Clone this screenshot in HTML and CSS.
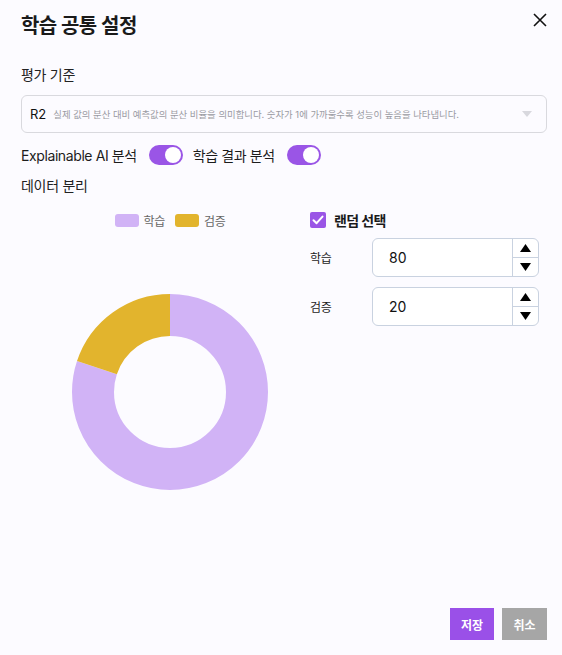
FILE: index.html
```html
<!DOCTYPE html>
<html lang="ko">
<head>
<meta charset="utf-8">
<title>학습 공통 설정</title>
<link rel="stylesheet" href="styles.css">
</head>
<body>
<div class="dialog">
  <div class="header">
    <h1 class="title">학습 공통 설정</h1>
    <button class="close" aria-label="닫기">
      <svg width="14" height="14" viewBox="0 0 14 14"><path d="M1 1L13 13M13 1L1 13" stroke="#111" stroke-width="1.6" fill="none"/></svg>
    </button>
  </div>

  <div class="section-label">평가 기준</div>
  <div class="select">
    <span class="sel-value">R2</span>
    <span class="sel-desc">실제 값의 분산 대비 예측값의 분산 비율을 의미합니다. 숫자가 1에 가까울수록 성능이 높음을 나타냅니다.</span>
    <svg class="sel-arrow" width="10" height="6" viewBox="0 0 10 6"><path d="M0 0H10L5 6Z" fill="#d8d8de"/></svg>
  </div>

  <div class="toggles">
    <span class="toggle-label">Explainable AI 분석</span>
    <span class="toggle"><span class="knob"></span></span>
    <span class="toggle-label">학습 결과 분석</span>
    <span class="toggle"><span class="knob"></span></span>
  </div>

  <div class="section-label split-label">데이터 분리</div>

  <div class="split">
    <div class="chart-col">
      <div class="legend">
        <span class="swatch lav"></span><span class="legend-text">학습</span>
        <span class="swatch gold"></span><span class="legend-text">검증</span>
      </div>
      <svg class="donut" width="200" height="200" viewBox="0 0 200 200">
        <g transform="rotate(-90 100 100)">
          <circle cx="100" cy="100" r="77" fill="none" stroke="#d1b3f6" stroke-width="42" stroke-dasharray="387.04 483.81"/>
          <circle cx="100" cy="100" r="77" fill="none" stroke="#e2b42d" stroke-width="42" stroke-dasharray="96.76 483.81" stroke-dashoffset="-387.04"/>
        </g>
      </svg>
    </div>
    <div class="form-col">
      <label class="check-row">
        <span class="checkbox">
          <svg width="12" height="10" viewBox="0 0 12 10"><path d="M1.5 5.2L4.6 8.2L10.5 1.6" stroke="#fff" stroke-width="2" fill="none" stroke-linecap="round" stroke-linejoin="round"/></svg>
        </span>
        <span class="check-text">랜덤 선택</span>
      </label>
      <div class="num-row">
        <span class="num-label">학습</span>
        <div class="num-input">
          <span class="num-value">80</span>
          <div class="spin">
            <span class="spin-btn"><svg width="11" height="8" viewBox="0 0 11 8"><path d="M5.5 0L11 8H0Z" fill="#000"/></svg></span>
            <span class="spin-btn"><svg width="11" height="8" viewBox="0 0 11 8"><path d="M0 0H11L5.5 8Z" fill="#000"/></svg></span>
          </div>
        </div>
      </div>
      <div class="num-row">
        <span class="num-label">검증</span>
        <div class="num-input">
          <span class="num-value">20</span>
          <div class="spin">
            <span class="spin-btn"><svg width="11" height="8" viewBox="0 0 11 8"><path d="M5.5 0L11 8H0Z" fill="#000"/></svg></span>
            <span class="spin-btn"><svg width="11" height="8" viewBox="0 0 11 8"><path d="M0 0H11L5.5 8Z" fill="#000"/></svg></span>
          </div>
        </div>
      </div>
    </div>
  </div>

  <div class="footer">
    <button class="btn save">저장</button>
    <button class="btn cancel">취소</button>
  </div>
</div>
</body>
</html>
```

FILE: styles.css
```css
* { box-sizing: border-box; }
html, body { margin: 0; padding: 0; }
body {
  background: #fcfbff;
  font-family: Inter, "Noto Sans CJK KR", sans-serif;
  color: #1c1c1c;
  width: 562px;
  height: 655px;
  overflow: hidden;
}
.dialog {
  height: 655px;
  display: flex;
  flex-direction: column;
  padding: 0 15px 15px 21px;
}
.header {
  display: flex;
  justify-content: space-between;
  align-items: flex-start;
  height: 52px;
}
.title {
  margin: 12px 0 0;
  font-size: 20px;
  font-weight: 600;
  line-height: 28px;
  letter-spacing: -0.6px;
  color: #1a1a1a;
}
.close {
  border: 0;
  background: none;
  padding: 0;
  margin: 13px 0 0;
  width: 14px;
  height: 14px;
  display: flex;
}
.section-label {
  font-size: 14px;
  line-height: 20px;
  letter-spacing: -0.3px;
  color: #222;
  margin-top: 13px;
}
.select {
  margin-top: 10px;
  width: 526px;
  height: 38px;
  border: 1px solid #d9d9de;
  border-radius: 6px;
  display: flex;
  align-items: center;
  padding: 0 14px 0 8px;
}
.sel-value {
  font-size: 13px;
  color: #111;
}
.sel-desc {
  font-size: 9.4px;
  color: #9a9aa2;
  margin-left: 7px;
  flex: 1;
  white-space: nowrap;
}
.sel-arrow { flex: none; }
.toggles {
  display: flex;
  align-items: center;
  margin-top: 12px;
  height: 20px;
}
.toggle-label {
  font-size: 14px;
  letter-spacing: -0.4px;
  color: #1c1c1c;
}
.toggle {
  width: 34px;
  height: 20px;
  border-radius: 10px;
  background: #9a55e6;
  margin: 0 10px 0 12px;
  display: flex;
  align-items: center;
  justify-content: flex-end;
  padding-right: 2px;
}
.knob {
  width: 16px;
  height: 16px;
  border-radius: 50%;
  background: #fff;
}
.split-label { margin-top: 11px; }
.split {
  display: flex;
  margin-top: 16px;
}
.chart-col {
  width: 260px;
  margin-left: 19px;
  display: flex;
  flex-direction: column;
  align-items: center;
}
.legend {
  display: flex;
  align-items: center;
  height: 16px;
}
.swatch {
  width: 24px;
  height: 13px;
  border-radius: 3px;
  margin-right: 5px;
}
.swatch.lav { background: #d1b3f6; }
.swatch.gold { background: #e2b42d; margin-left: 10px; }
.legend-text {
  font-size: 12px;
  letter-spacing: -0.3px;
  color: #666;
}
.donut {
  margin-top: 64px;
  margin-left: -1px;
}
.form-col {
  margin-left: 10px;
  width: 229px;
  display: flex;
  flex-direction: column;
}
.check-row {
  display: flex;
  align-items: center;
  height: 16px;
}
.checkbox {
  width: 16px;
  height: 16px;
  border-radius: 2px;
  background: #9a55e6;
  display: flex;
  align-items: center;
  justify-content: center;
}
.check-text {
  margin-left: 8px;
  font-size: 14px;
  font-weight: 700;
  letter-spacing: -0.6px;
  color: #1a1a1a;
}
.num-row {
  display: flex;
  align-items: center;
  margin-top: 10px;
}
.num-row + .num-row { margin-top: 10px; }
.num-label {
  width: 62px;
  font-size: 12px;
  letter-spacing: -0.3px;
  color: #1c1c1c;
}
.num-input {
  width: 167px;
  height: 39px;
  border: 1px solid #c9d2e0;
  border-radius: 6px;
  display: flex;
  align-items: center;
  background: #fff;
}
.num-value {
  flex: 1;
  padding-left: 16px;
  font-size: 14px;
  color: #111;
}
.spin {
  width: 26px;
  height: 100%;
  border-left: 1px solid #c9d2e0;
  display: flex;
  flex-direction: column;
}
.spin-btn {
  flex: 1;
  display: flex;
  align-items: center;
  justify-content: center;
}
.spin-btn + .spin-btn { border-top: 1px solid #c9d2e0; }
.footer {
  margin-top: auto;
  display: flex;
  justify-content: flex-end;
  gap: 8px;
}
.btn {
  height: 32px;
  border: 0;
  border-radius: 0;
  color: #fff;
  font-family: Inter, "Noto Sans CJK KR", sans-serif;
  font-size: 12px;
  font-weight: 700;
  padding: 0;
}
.save { width: 44px; background: #9a50e8; }
.cancel { width: 45px; background: #a6a6a6; }
```
